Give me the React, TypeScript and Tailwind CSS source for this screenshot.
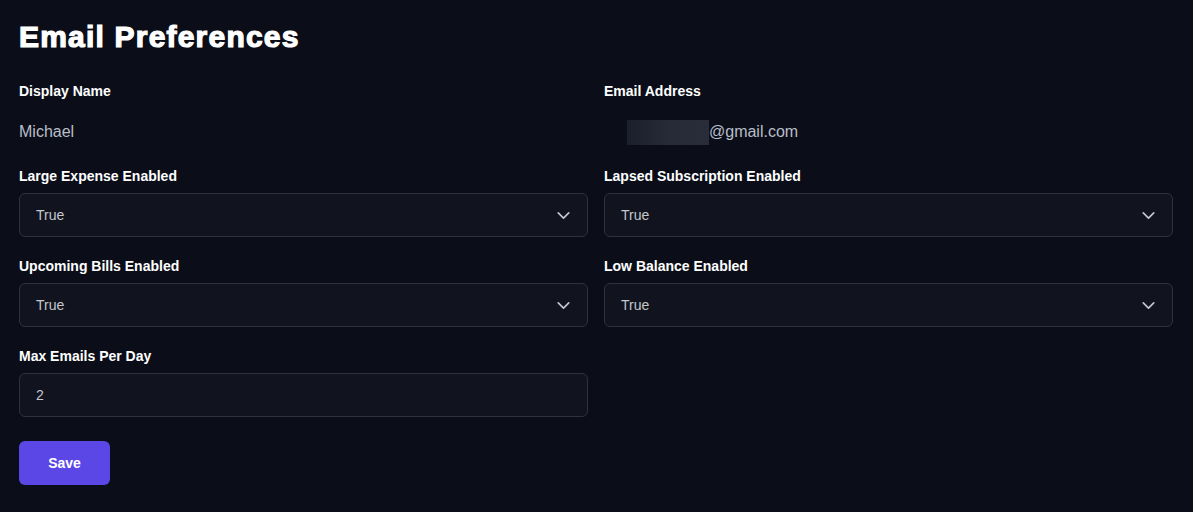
import { ChevronDown } from "lucide-react";

const selects = [
  ["Large Expense Enabled", "Lapsed Subscription Enabled"],
  ["Upcoming Bills Enabled", "Low Balance Enabled"],
];

function Label({ children }: { children: React.ReactNode }) {
  return <p className="text-sm font-bold leading-5 text-white">{children}</p>;
}

function SelectField({ label }: { label: string }) {
  return (
    <div className="flex flex-col gap-[7px]">
      <Label>{label}</Label>
      <div className="flex h-11 items-center justify-between rounded-md border border-[#2e323e] bg-[#11141e] pl-4 pr-[13px]">
        <span className="text-sm text-[#c3c7cf]">True</span>
        <ChevronDown size={21} strokeWidth={1.9} className="text-[#c3c7cf]" />
      </div>
    </div>
  );
}

export default function App() {
  return (
    <div className="min-h-[512px] bg-[#0b0e19] pl-[19px] pr-5 pt-[19px] font-['Liberation_Sans',Arial,sans-serif]">
      <h1 className="text-[30px] font-bold leading-9 tracking-[1.2px] text-white [-webkit-text-stroke:1.2px_white]">
        Email Preferences
      </h1>

      <div className="mt-[26px] grid grid-cols-2 gap-x-4">
        <div className="flex flex-col">
          <Label>Display Name</Label>
          <p className="mt-[21px] text-base leading-5 text-[#b9bec8]">Michael</p>
        </div>
        <div className="flex flex-col">
          <Label>Email Address</Label>
          <div className="mt-[21px] flex h-5 items-center">
            <div className="ml-[23px] h-[25px] w-[82px] shrink-0 bg-gradient-to-r from-[#1b1e2b] via-[#272a37] to-[#2a2d39]" />
            <p className="text-base leading-5 text-[#b9bec8]">@gmail.com</p>
          </div>
        </div>
      </div>

      <div className="mt-6 flex flex-col gap-[19px]">
        {selects.map((row) => (
          <div key={row[0]} className="grid grid-cols-2 gap-x-4">
            {row.map((label) => (
              <SelectField key={label} label={label} />
            ))}
          </div>
        ))}

        <div className="grid grid-cols-2 gap-x-4">
          <div className="flex flex-col gap-[7px]">
            <Label>Max Emails Per Day</Label>
            <div className="flex h-11 items-center rounded-md border border-[#2e323e] bg-[#11141e] pl-4">
              <span className="text-sm text-[#c3c7cf]">2</span>
            </div>
          </div>
        </div>
      </div>

      <button className="mt-6 h-11 w-[91px] rounded-md bg-[#5b47e6] text-sm font-bold text-white">
        Save
      </button>
    </div>
  );
}
